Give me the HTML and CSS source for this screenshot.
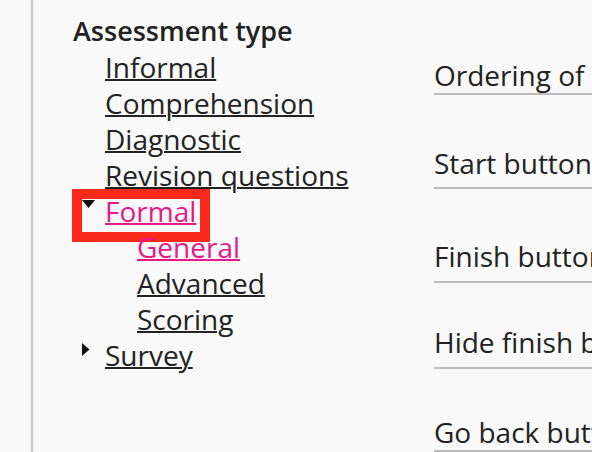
FILE: index.html
```html
<!DOCTYPE html>
<html lang="en">
<head>
  <meta charset="UTF-8">
  <title>Assessment settings</title>
  <link rel="stylesheet" href="styles.css">
</head>
<body>

  <div class="page">
    <div class="rail"></div>

    <nav class="sidenav">
      <div class="navTitle">Assessment type</div>
      <ul class="navList">
        <li class="navItem"><a href="#">Informal</a></li>
        <li class="navItem"><a href="#">Comprehension</a></li>
        <li class="navItem"><a href="#">Diagnostic</a></li>
        <li class="navItem"><a href="#">Revision questions</a></li>
        <li class="navItem toggle open">
          <span class="marker"><svg width="13" height="8" viewBox="0 0 13 8"><path d="M0 0H13L6.5 8Z" fill="#111"/></svg></span>
          <a href="#" class="active">Formal</a>
          <div class="highlight"></div>
        </li>
        <li class="navItem sub"><a href="#" class="active">General</a></li>
        <li class="navItem sub"><a href="#">Advanced</a></li>
        <li class="navItem sub"><a href="#">Scoring</a></li>
        <li class="navItem toggle">
          <span class="marker closed"><svg width="8" height="13" viewBox="0 0 8 13"><path d="M0 0V13L7.5 6.5Z" fill="#111"/></svg></span>
          <a href="#">Survey</a>
        </li>
      </ul>
    </nav>

    <main class="settings">
      <div class="field f1"><span>Ordering of questions</span></div>
      <div class="field f2"><span>Start button text</span></div>
      <div class="field f3"><span>Finish button text</span></div>
      <div class="field f4"><span>Hide finish button</span></div>
      <div class="field f5"><span>Go back button text</span></div>
    </main>
  </div>

</body>
</html>
```

FILE: styles.css
```css
body {
  margin: 0;
  padding: 0;
  background: #f9f9f9;
  font-family: "Open Sans", sans-serif;
  color: #222;
  overflow: hidden;
}
.page {
  display: flex;
  height: 452px;
  width: 592px;
  overflow: hidden;
}
.rail {
  flex: 0 0 31px;
  border-right: 2px solid #c8c8c8;
}
.sidenav {
  flex: 0 0 361px;
  padding: 13px 0 0 40px;
  font-size: 28px;
  line-height: 36px;
}
.navTitle {
  font-weight: 600;
  font-size: 27px;
  color: #222;
}
.navList {
  list-style: none;
  margin: 0;
  padding: 0 0 0 32px;
}
.navItem {
  position: relative;
  display: flex;
  white-space: nowrap;
}
.navItem a {
  color: #222;
  text-decoration: underline;
  text-decoration-thickness: 2px;
  text-underline-offset: 1px;
}
.navItem a.active {
  color: #e8178a;
}
.navItem.sub {
  padding-left: 32px;
}
.navItem.toggle {
  margin-left: -23px;
}
.marker {
  flex: 0 0 23px;
  display: flex;
  align-items: flex-start;
  padding-top: 7px;
  box-sizing: border-box;
}
.marker.closed {
  padding-top: 6px;
}
.highlight {
  position: absolute;
  left: -10px;
  top: -4px;
  width: 138px;
  height: 53px;
  border: 10px solid #f9291b;
  box-sizing: border-box;
  pointer-events: none;
}
.settings {
  flex: 1;
  min-width: 0;
  font-size: 28px;
  line-height: 36px;
  white-space: nowrap;
}
.field {
  border-bottom: 2px solid #bbb;
  overflow: hidden;
}
.f1 { margin-top: 57px; padding-bottom: 0; }
.f2 { margin-top: 50px; padding-bottom: 6px; }
.f3 { margin-top: 49px; padding-bottom: 7px; }
.f4 { margin-top: 41px; padding-bottom: 7px; }
.f5 { margin-top: 45px; padding-bottom: 0; }
```
